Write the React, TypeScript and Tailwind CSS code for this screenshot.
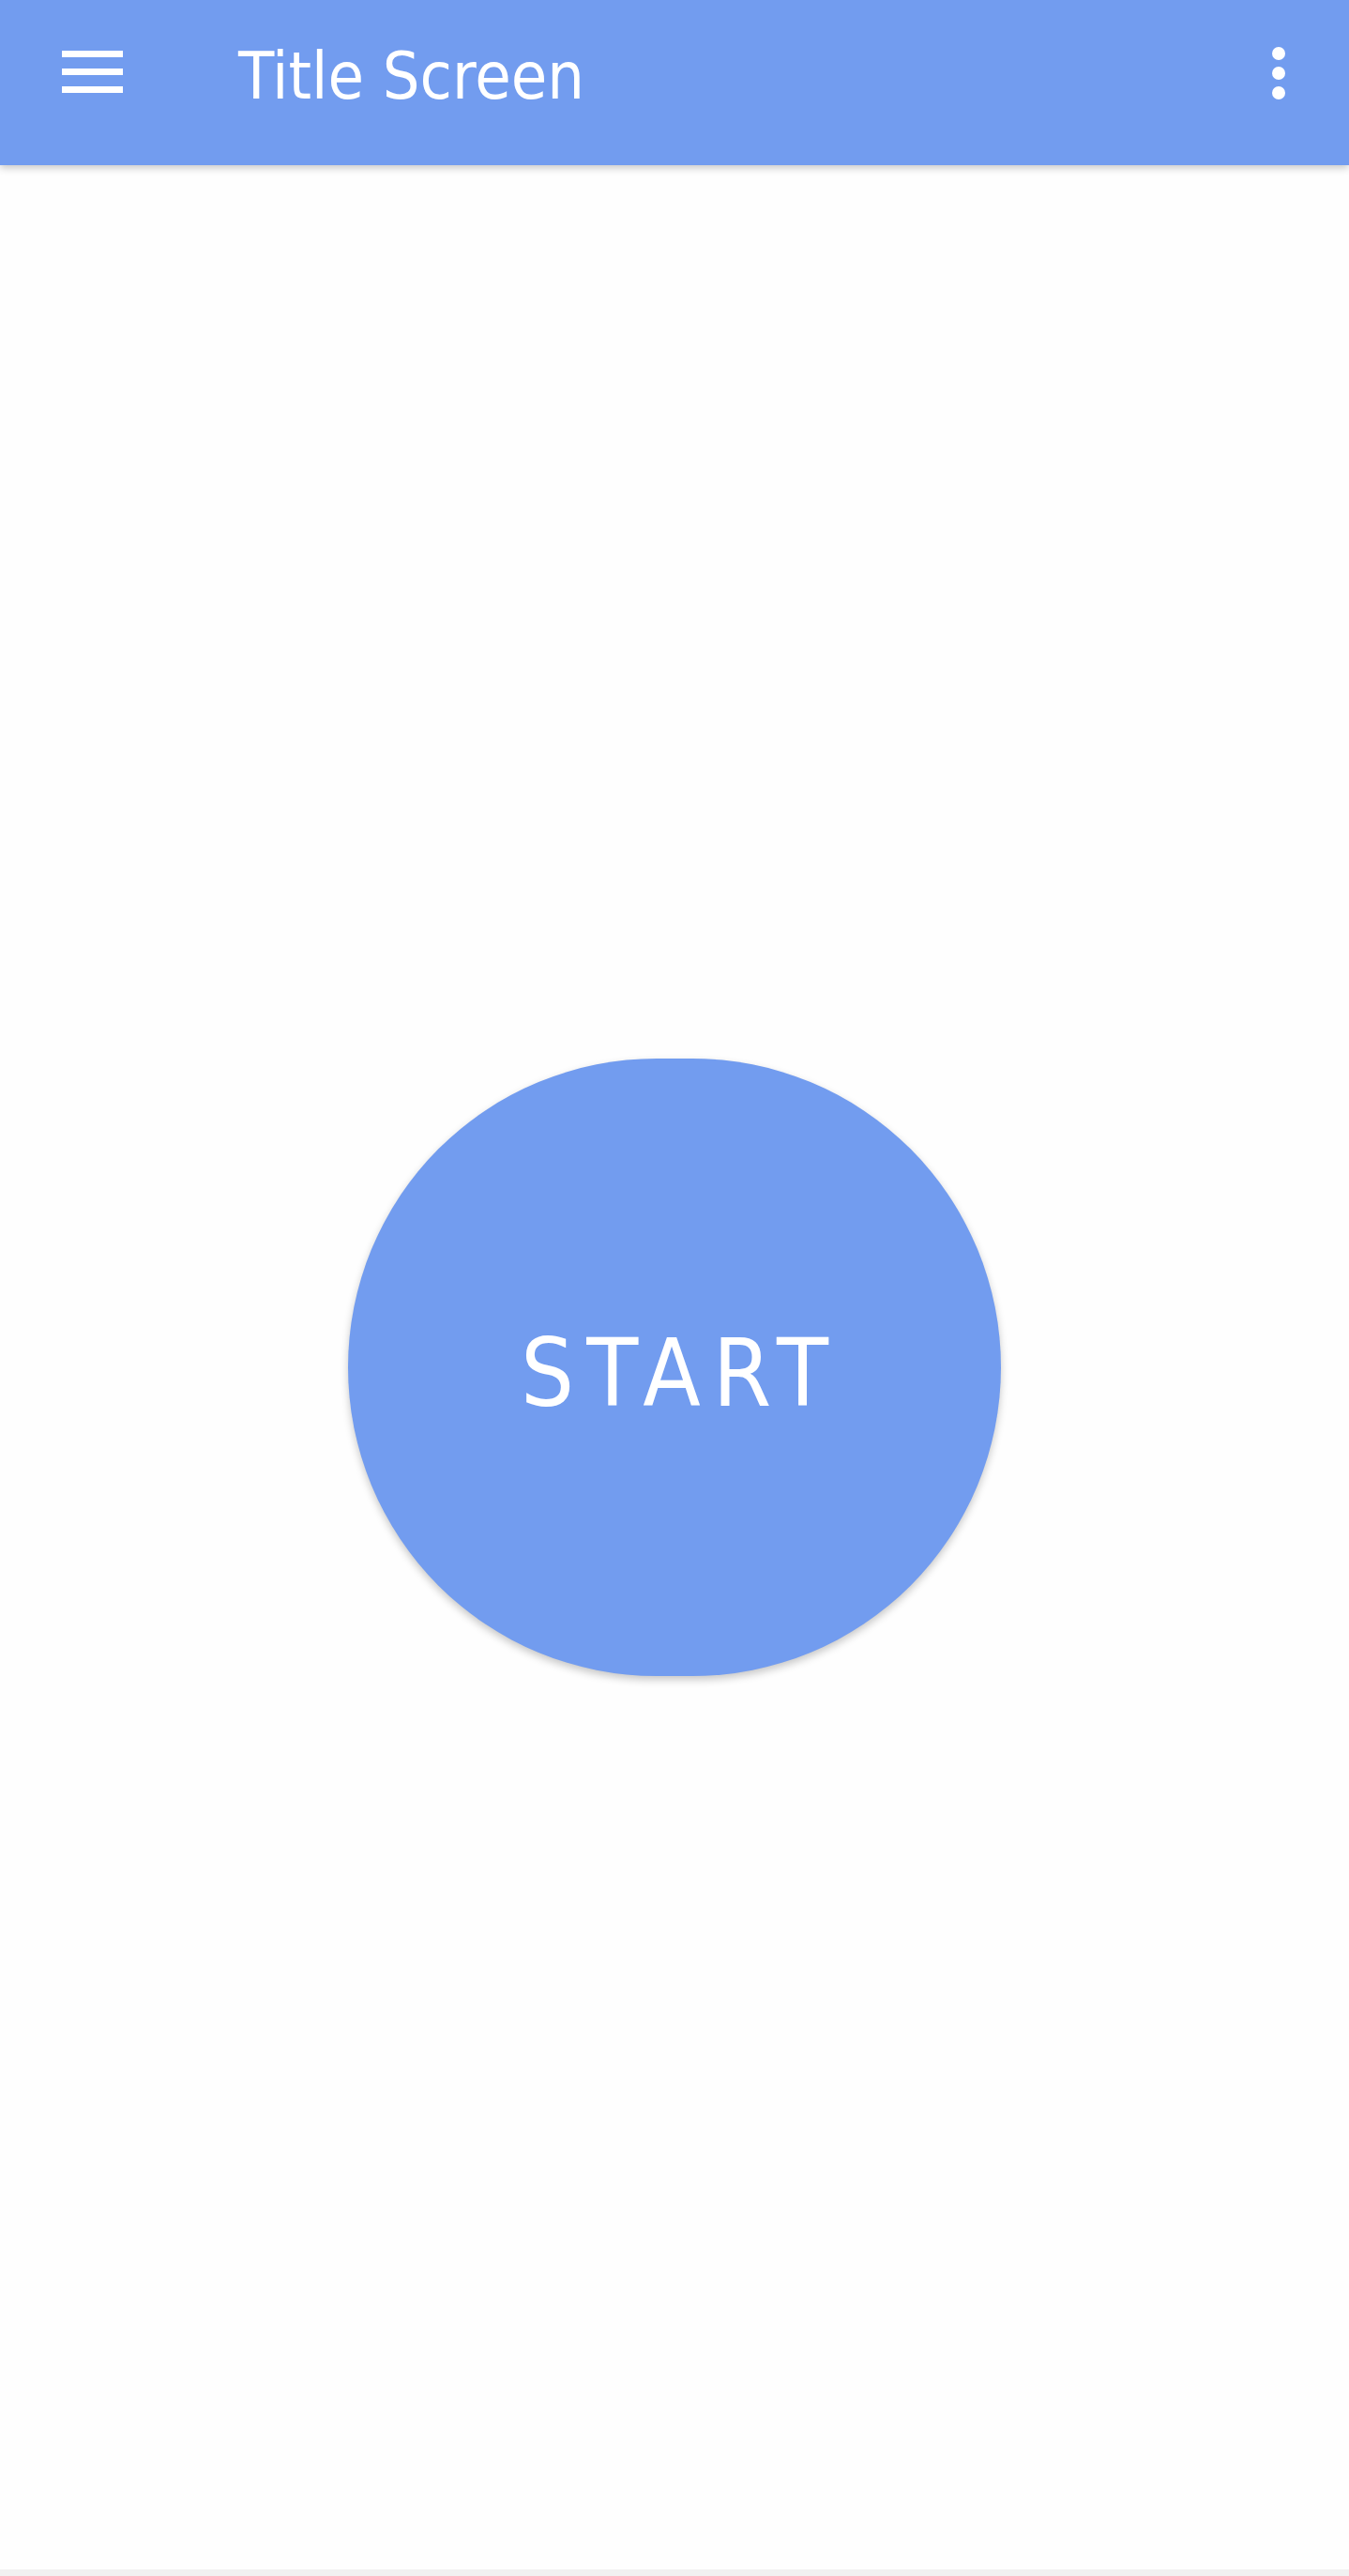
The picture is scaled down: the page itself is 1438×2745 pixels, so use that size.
import React from 'react';

const font = "font-['DejaVu_Sans_Condensed','DejaVu_Sans',sans-serif] font-stretch-condensed";

const TitleScreen: React.FC = () => {
  return (
    <div className="min-h-[2745px] flex flex-col bg-[#fefefe]">
      {/* App bar */}
      <header className="relative z-10 h-[176px] flex items-start bg-[#729cef] shadow-[0_3px_8px_rgba(0,0,0,0.22)]">
        <button className="ml-[66px] mt-[54px] flex flex-col gap-[12px]">
          <span className="block w-[65px] h-[7px] bg-white" />
          <span className="block w-[65px] h-[7px] bg-white" />
          <span className="block w-[65px] h-[7px] bg-white" />
        </button>
        <h1 className={`${font} ml-[123px] mt-[46px] text-[69.6px] leading-none text-white font-normal`}>
          Title Screen
        </h1>
        <button className="ml-auto mr-[68px] mt-[50px] flex flex-col gap-[7px]">
          <span className="block w-[14px] h-[14px] rounded-full bg-white" />
          <span className="block w-[14px] h-[14px] rounded-full bg-white" />
          <span className="block w-[14px] h-[14px] rounded-full bg-white" />
        </button>
      </header>

      {/* Content */}
      <main className="flex-1 flex items-center justify-center">
        <button className="w-[696px] h-[658px] rounded-full bg-[#729cef] flex items-center justify-center shadow-[0_4px_8px_rgba(0,0,0,0.22)]">
          <span className={`${font} mt-[13px] pl-[13px] text-[100px] leading-none tracking-[13px] text-white`}>
            START
          </span>
        </button>
      </main>

      <div className="h-[7px] bg-[#f1f1f1]" />
    </div>
  );
};

export default function App() {
  return <TitleScreen />;
}
